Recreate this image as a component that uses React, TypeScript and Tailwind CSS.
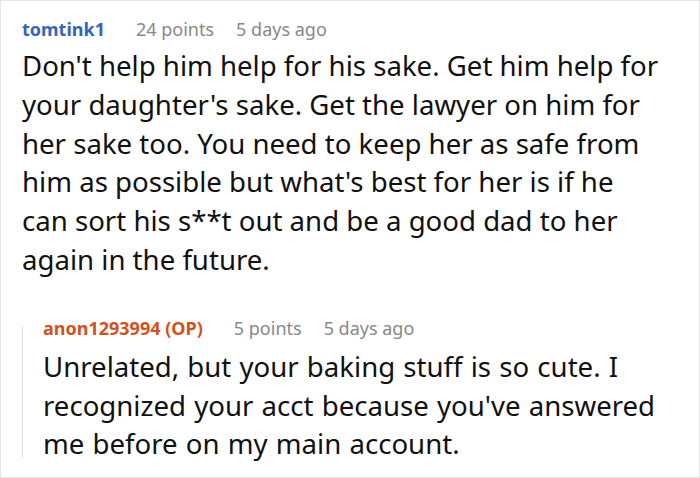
export default function App() {
  return (
    <div className="w-[700px] h-[478px] bg-white border border-[#e4e4e4] font-['Noto_Sans',sans-serif] text-[#111] overflow-hidden">
      <div className="pl-[21px] pr-4 pt-[14px]">
        <div className="flex items-baseline text-[18px] leading-[28px]">
          <span className="font-bold text-[#3565b8]">tomtink1</span>
          <span className="ml-[31px] text-[#888]">24 points</span>
          <span className="ml-[22px] text-[#888]">5 days ago</span>
        </div>
        <p className="mt-[3px] text-[27.6px] leading-[38.8px] whitespace-nowrap">
          Don't help him help for his sake. Get him help for
          <br />
          your daughter's sake. Get the lawyer on him for
          <br />
          her sake too. You need to keep her as safe from
          <br />
          him as possible but what's best for her is if he
          <br />
          can sort his s**t out and be a good dad to her
          <br />
          again in the future.
        </p>
        <div className="mt-[35px] flex">
          <div className="w-px bg-[#dddddd] mt-[12px] mb-[5px]" />
          <div className="pl-[20px]">
            <div className="flex items-baseline text-[18px] leading-[28px]">
              <span className="font-bold text-[#d4511e]">anon1293994 (OP)</span>
              <span className="ml-[31px] text-[#888]">5 points</span>
              <span className="ml-[22px] text-[#888]">5 days ago</span>
            </div>
            <p className="mt-[5px] text-[27.6px] leading-[38.8px] whitespace-nowrap [word-spacing:1px]">
              Unrelated, but your baking stuff is so cute. I
              <br />
              recognized your acct because you've answered
              <br />
              me before on my main account.
            </p>
          </div>
        </div>
      </div>
    </div>
  );
}
